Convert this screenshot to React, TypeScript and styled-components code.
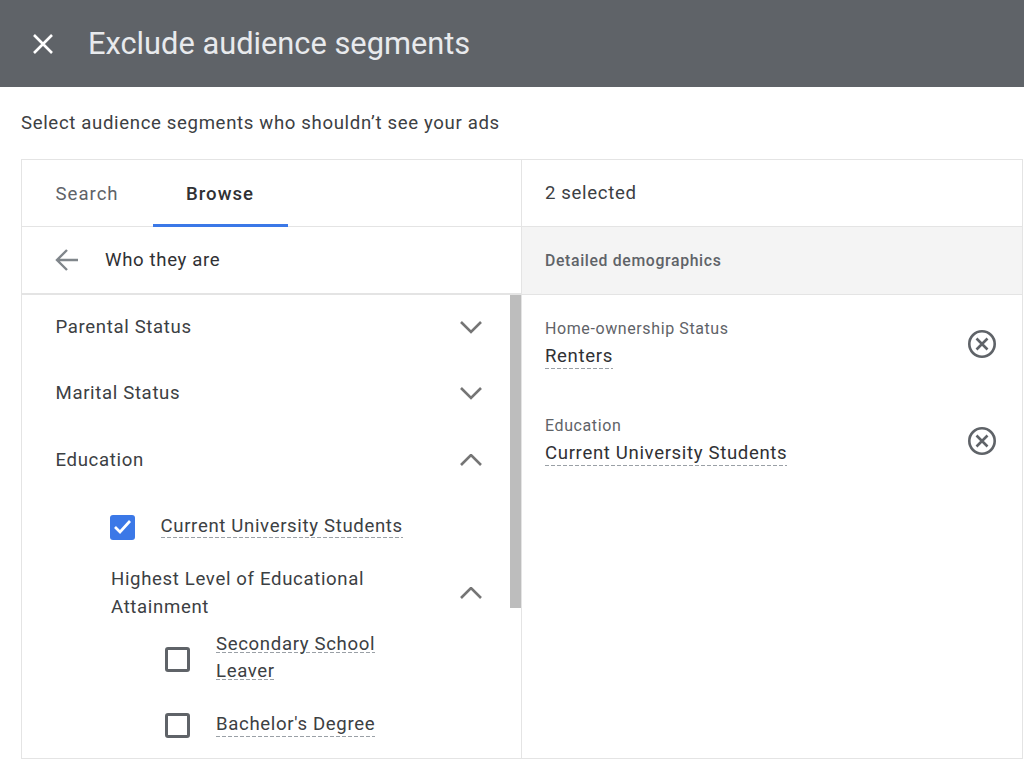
import React from 'react'
import styled, { createGlobalStyle } from 'styled-components'

const GlobalStyle = createGlobalStyle`
  html, body {
    margin: 0;
    padding: 0;
    background: #ffffff;
    font-family: Roboto, "Liberation Sans", sans-serif;
    overflow: hidden;
  }
`

const Page = styled.div`
  width: 1024px;
  height: 762px;
  display: flex;
  flex-direction: column;
  overflow: hidden;
`

const Header = styled.header`
  height: 87px;
  flex: none;
  background-color: #5f6368;
  display: flex;
  align-items: center;
  padding-left: 30px;
  gap: 32px;
`

const Title = styled.h1`
  margin: 0;
  font-size: 30.8px;
  font-weight: 400;
  color: #e8eaed;
`

const Subtitle = styled.div`
  height: 72px;
  flex: none;
  padding-left: 21px;
  display: flex;
  align-items: center;
  font-size: 18.6px;
  letter-spacing: 0.65px;
  color: #3c4043;
`

const Panel = styled.div`
  margin-left: 21px;
  width: 1002px;
  height: 600px;
  flex: none;
  box-sizing: border-box;
  border: 1.5px solid #e4e4e4;
  display: grid;
  grid-template-columns: 499px 1fr;
`

const Column = styled.div`
  display: flex;
  flex-direction: column;
  min-height: 0;
  & + & {
    border-left: 1.5px solid #e4e4e4;
  }
`

const TabBar = styled.div`
  height: 66px;
  flex: none;
  display: flex;
  border-bottom: 1.5px solid #e4e4e4;
`

const Tab = styled.div<{ $active?: boolean }>`
  width: ${p => (p.$active ? 135 : 130.5)}px;
  box-sizing: border-box;
  display: flex;
  align-items: center;
  justify-content: ${p => (p.$active ? 'center' : 'flex-start')};
  padding-left: ${p => (p.$active ? 0 : 33.5)}px;
  padding-top: ${p => (p.$active ? 3 : 1)}px;
  font-size: 18.6px;
  letter-spacing: 1px;
  font-weight: ${p => (p.$active ? 500 : 400)};
  color: ${p => (p.$active ? '#303134' : '#5f6368')};
  border-bottom: ${p => (p.$active ? '3px solid #3b78e7' : 'none')};
  height: ${p => (p.$active ? 67 : 66)}px;
`

const BackRow = styled.div`
  height: 66px;
  flex: none;
  display: flex;
  align-items: center;
  padding-left: 32px;
  gap: 25px;
  font-size: 18.6px;
  letter-spacing: 0.65px;
  color: #303134;
  border-bottom: 2px solid #e4e4e4;
`

const TreeWrap = styled.div`
  flex: 1;
  min-height: 0;
  position: relative;
  overflow: hidden;
`

const ScrollThumb = styled.div`
  position: absolute;
  top: -1px;
  right: 0;
  width: 11px;
  height: 314px;
  background-color: #bdbdbd;
`

const Group = styled.div`
  height: 66.3px;
  display: flex;
  align-items: center;
  justify-content: space-between;
  padding: 0 38px 0 33.5px;
  font-size: 18.6px;
  letter-spacing: 0.65px;
  color: #3c4043;
  & > span {
    margin-top: -2px;
  }
`

const CheckRow = styled.div<{ $indent: number; $height: number }>`
  height: ${p => p.$height}px;
  display: flex;
  align-items: center;
  padding-left: ${p => p.$indent}px;
  gap: 26px;
`

const Box = styled.div<{ $checked?: boolean }>`
  width: 25px;
  height: 25px;
  margin-top: 2px;
  box-sizing: border-box;
  flex: none;
  border-radius: 3px;
  border: ${p => (p.$checked ? 'none' : '3px solid #5f6368')};
  background-color: ${p => (p.$checked ? '#3b78e7' : '#ffffff')};
  display: flex;
  align-items: center;
  justify-content: center;
`

const Dashed = styled.span`
  font-size: 18.6px;
  letter-spacing: 0.65px;
  line-height: 27.5px;
  color: #3c4043;
  background-image: repeating-linear-gradient(90deg, #9aa0a6 0 4px, transparent 4px 6px);
  background-size: 100% 1px;
  background-repeat: no-repeat;
  background-position: 0 calc(100% - 2px);
`

const LabelStack = styled.div`
  width: 165px;
  line-height: 27.5px;
`

const SubGroup = styled.div`
  height: 64px;
  display: flex;
  align-items: center;
  justify-content: space-between;
  padding: 0 38px 0 89px;
  font-size: 18.6px;
  letter-spacing: 0.65px;
  line-height: 28px;
  color: #3c4043;
  & > svg {
    margin-top: 7px;
  }
`

const SubGroupLabel = styled.div`
  width: 290px;
  padding-top: 4px;
`

const SelectedHead = styled.div`
  height: 66px;
  flex: none;
  display: flex;
  align-items: center;
  padding-left: 23px;
  font-size: 18.6px;
  letter-spacing: 0.65px;
  color: #3c4043;
  border-bottom: 1.5px solid #e4e4e4;
`

const CategoryHead = styled.div`
  height: 67px;
  flex: none;
  display: flex;
  align-items: center;
  padding-left: 23px;
  font-size: 15.8px;
  font-weight: 500;
  letter-spacing: 0.65px;
  color: #5f6368;
  background-color: #f4f4f4;
  border-bottom: 1.5px solid #e4e4e4;
`

const SelectedList = styled.div`
  padding-top: 15px;
  display: flex;
  flex-direction: column;
  gap: 31px;
`

const SelectedItem = styled.div`
  height: 66px;
  display: flex;
  align-items: center;
  justify-content: space-between;
  padding: 0 25px 0 23px;
  & > svg {
    margin-top: 2px;
  }
`

const ItemCategory = styled.div`
  font-size: 16px;
  letter-spacing: 0.6px;
  color: #5f6368;
  line-height: 24px;
  margin-bottom: 2px;
`

const ItemName = styled(Dashed)`
  display: inline-block;
  line-height: 26px;
  color: #303134;
  background-position: 0 100%;
`

const ArrowLeft = () => (
  <svg width="26" height="26" viewBox="0 0 26 26" fill="none" stroke="#80868b" strokeWidth="2.4">
    <path d="M24 13H3M13 3 3 13l10 10" />
  </svg>
)

const CloseIcon = () => (
  <svg width="26" height="26" viewBox="0 0 26 26" fill="none" stroke="#ffffff" strokeWidth="2.6">
    <path d="M4 4l18 18M22 4 4 22" />
  </svg>
)

const Chevron = ({ up }: { up?: boolean }) => (
  <svg width="24" height="14" viewBox="0 0 24 14" fill="none" stroke="#757575" strokeWidth="2.6">
    <path d={up ? 'M2 11 12 1l10 10' : 'M2 1l10 10L22 1'} />
  </svg>
)

const Tick = () => (
  <svg width="19" height="16" viewBox="0 0 19 16" fill="none" stroke="#ffffff" strokeWidth="2.7">
    <path d="M2 8l5 5L17 2" />
  </svg>
)

const RemoveIcon = () => (
  <svg width="30" height="30" viewBox="0 0 30 30" fill="none" stroke="#5f6368" strokeWidth="2.6">
    <circle cx="15" cy="15" r="12.7" />
    <path d="M9.5 9.5l11 11M20.5 9.5l-11 11" />
  </svg>
)

const App = () => (
  <Page>
    <GlobalStyle />
    <Header>
      <CloseIcon />
      <Title>Exclude audience segments</Title>
    </Header>
    <Subtitle>Select audience segments who shouldn’t see your ads</Subtitle>
    <Panel>
      <Column>
        <TabBar>
          <Tab>Search</Tab>
          <Tab $active>Browse</Tab>
        </TabBar>
        <BackRow>
          <ArrowLeft />
          Who they are
        </BackRow>
        <TreeWrap>
          <ScrollThumb />
          <Group><span>Parental Status</span><Chevron /></Group>
          <Group><span>Marital Status</span><Chevron /></Group>
          <Group><span>Education</span><Chevron up /></Group>
          <CheckRow $indent={87.5} $height={65}>
            <Box $checked><Tick /></Box>
            <Dashed>Current University Students</Dashed>
          </CheckRow>
          <SubGroup>
            <SubGroupLabel>Highest Level of Educational Attainment</SubGroupLabel>
            <Chevron up />
          </SubGroup>
          <CheckRow $indent={143} $height={71}>
            <Box />
            <LabelStack>
              <Dashed>Secondary School</Dashed><br />
              <Dashed>Leaver</Dashed>
            </LabelStack>
          </CheckRow>
          <CheckRow $indent={143} $height={62}>
            <Box />
            <Dashed>Bachelor's Degree</Dashed>
          </CheckRow>
        </TreeWrap>
      </Column>
      <Column>
        <SelectedHead>2 selected</SelectedHead>
        <CategoryHead>Detailed demographics</CategoryHead>
        <SelectedList>
          <SelectedItem>
            <div>
              <ItemCategory>Home-ownership Status</ItemCategory>
              <ItemName>Renters</ItemName>
            </div>
            <RemoveIcon />
          </SelectedItem>
          <SelectedItem>
            <div>
              <ItemCategory>Education</ItemCategory>
              <ItemName>Current University Students</ItemName>
            </div>
            <RemoveIcon />
          </SelectedItem>
        </SelectedList>
      </Column>
    </Panel>
  </Page>
)

export default App
